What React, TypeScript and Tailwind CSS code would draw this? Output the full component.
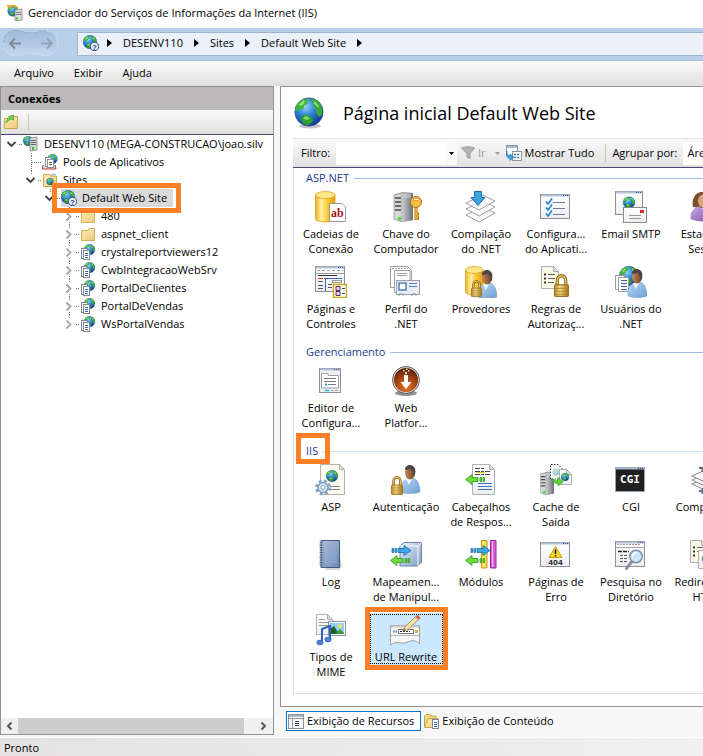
import React from "react";

type IconName =
    | "database" | "serverKey" | "layers" | "checklist" | "mail" | "session"
    | "pages" | "profile" | "providers" | "rules" | "users" | "editor" | "webPlatform"
    | "asp" | "auth" | "headers" | "cache" | "cgi" | "compress" | "log" | "handlers"
    | "modules" | "error404" | "search" | "redirect" | "mime" | "rewrite";

interface Feature {
    icon: IconName;
    lines: string[];
    selected?: boolean;
}

interface FeatureGroup {
    title: string;
    highlighted?: boolean;
    features: Feature[];
}

interface TreeNode {
    label: string;
    depth: number;
    icon: "server" | "pool" | "sites" | "site" | "folder" | "app";
    state: "open" | "closed" | "leaf";
    last?: boolean;
    selected?: boolean;
}

const tree: TreeNode[] = [
    { label: "DESENV110 (MEGA-CONSTRUCAO\\joao.silv", depth: 0, icon: "server", state: "open", last: true },
    { label: "Pools de Aplicativos", depth: 1, icon: "pool", state: "leaf" },
    { label: "Sites", depth: 1, icon: "sites", state: "open", last: true },
    { label: "Default Web Site", depth: 2, icon: "site", state: "open", last: true, selected: true },
    { label: "480", depth: 3, icon: "folder", state: "closed" },
    { label: "aspnet_client", depth: 3, icon: "folder", state: "closed" },
    { label: "crystalreportviewers12", depth: 3, icon: "app", state: "closed" },
    { label: "CwbIntegracaoWebSrv", depth: 3, icon: "app", state: "closed" },
    { label: "PortalDeClientes", depth: 3, icon: "app", state: "closed" },
    { label: "PortalDeVendas", depth: 3, icon: "app", state: "closed" },
    { label: "WsPortalVendas", depth: 3, icon: "app", state: "closed", last: true },
];

const indents = ["pl-[4px]", "pl-[23px]", "pl-[42px]", "pl-[61px]"];

const groups: FeatureGroup[] = [
    {
        title: "ASP.NET",
        features: [
            { icon: "database", lines: ["Cadeias de", "Conexão"] },
            { icon: "serverKey", lines: ["Chave do", "Computador"] },
            { icon: "layers", lines: ["Compilação", "do .NET"] },
            { icon: "checklist", lines: ["Configura...", "do Aplicati..."] },
            { icon: "mail", lines: ["Email SMTP"] },
            { icon: "session", lines: ["Estado de", "Sessão"] },
            { icon: "pages", lines: ["Páginas e", "Controles"] },
            { icon: "profile", lines: ["Perfil do", ".NET"] },
            { icon: "providers", lines: ["Provedores"] },
            { icon: "rules", lines: ["Regras de", "Autorizaç..."] },
            { icon: "users", lines: ["Usuários do", ".NET"] },
        ],
    },
    {
        title: "Gerenciamento",
        features: [
            { icon: "editor", lines: ["Editor de", "Configura..."] },
            { icon: "webPlatform", lines: ["Web", "Platfor..."] },
        ],
    },
    {
        title: "IIS",
        highlighted: true,
        features: [
            { icon: "asp", lines: ["ASP"] },
            { icon: "auth", lines: ["Autenticação"] },
            { icon: "headers", lines: ["Cabeçalhos", "de Respos..."] },
            { icon: "cache", lines: ["Cache de", "Saída"] },
            { icon: "cgi", lines: ["CGI"] },
            { icon: "compress", lines: ["Compacta..."] },
            { icon: "log", lines: ["Log"] },
            { icon: "handlers", lines: ["Mapeamen...", "de Manipul..."] },
            { icon: "modules", lines: ["Módulos"] },
            { icon: "error404", lines: ["Páginas de", "Erro"] },
            { icon: "search", lines: ["Pesquisa no", "Diretório"] },
            { icon: "redirect", lines: ["Redirecion...", "HTTP"] },
            { icon: "mime", lines: ["Tipos de", "MIME"] },
            { icon: "rewrite", lines: ["URL Rewrite"], selected: true },
        ],
    },
];

/* ---------- shared drawing parts ---------- */

const Gradients = () => (
    <svg width="0" height="0" className="absolute" aria-hidden="true">
        <defs>
            <radialGradient id="ocean" cx="0.38" cy="0.3" r="0.75">
                <stop offset="0" stopColor="#8fd4f8" />
                <stop offset="0.45" stopColor="#2f83d6" />
                <stop offset="1" stopColor="#0d2f8c" />
            </radialGradient>
            <linearGradient id="gold" x1="0" x2="1">
                <stop offset="0" stopColor="#f2b01f" />
                <stop offset="0.3" stopColor="#fff0a0" />
                <stop offset="0.6" stopColor="#fbc93a" />
                <stop offset="1" stopColor="#e79d12" />
            </linearGradient>
            <linearGradient id="brass" x1="0" x2="1">
                <stop offset="0" stopColor="#c08a24" />
                <stop offset="0.4" stopColor="#f6dc8c" />
                <stop offset="1" stopColor="#a87416" />
            </linearGradient>
            <linearGradient id="steel" x1="0" x2="1">
                <stop offset="0" stopColor="#c9cdd0" />
                <stop offset="0.5" stopColor="#9a9fa3" />
                <stop offset="1" stopColor="#6a6f74" />
            </linearGradient>
            <linearGradient id="shirt" x1="0" x2="1" y2="1">
                <stop offset="0" stopColor="#b9d8f4" />
                <stop offset="1" stopColor="#6c9fd4" />
            </linearGradient>
            <linearGradient id="lilac" x1="0" x2="1" y2="1">
                <stop offset="0" stopColor="#c7a6e6" />
                <stop offset="1" stopColor="#8357b0" />
            </linearGradient>
            <linearGradient id="skin" x1="0" x2="1">
                <stop offset="0" stopColor="#c08a5c" />
                <stop offset="1" stopColor="#6e4222" />
            </linearGradient>
            <linearGradient id="folder" x1="0" x2="1" y2="1">
                <stop offset="0" stopColor="#fdeeb6" />
                <stop offset="1" stopColor="#ecc97a" />
            </linearGradient>
            <linearGradient id="paper" x2="0" y2="1">
                <stop offset="0" stopColor="#ffffff" />
                <stop offset="1" stopColor="#eceef0" />
            </linearGradient>
            <linearGradient id="cube" x2="1" y2="1">
                <stop offset="0" stopColor="#eaf2fb" />
                <stop offset="1" stopColor="#7f9dc0" />
            </linearGradient>
            <linearGradient id="book" x2="1" y2="1">
                <stop offset="0" stopColor="#b4c6e0" />
                <stop offset="1" stopColor="#6c89b4" />
            </linearGradient>
            <linearGradient id="navwell" x2="0" y2="1">
                <stop offset="0" stopColor="#9fb9da" />
                <stop offset="1" stopColor="#c6d8ee" />
            </linearGradient>
            <radialGradient id="ember" cx="0.5" cy="0.8" r="0.8">
                <stop offset="0" stopColor="#e8742a" />
                <stop offset="0.6" stopColor="#9a3d10" />
                <stop offset="1" stopColor="#4e2009" />
            </radialGradient>
        </defs>
    </svg>
);

const Globe = ({ cx, cy, r }: { cx: number; cy: number; r: number }) => (
    <g transform={`translate(${cx - r} ${cy - r}) scale(${r / 14})`}>
        <circle cx="14" cy="14" r="13.6" fill="url(#ocean)" stroke="#27549c" strokeWidth="0.8" />
        <path d="M2 7 C4 4 7 2 9 2 L14 1 L12 4 L13 6 L9 8 L9 10 L6 12 L4 11 L1 14 C0.500 11 1 9 2 7Z" fill="#3fb53a" />
        <path d="M17 1 C22 2 26 6 27 11 L27 16 L24 19 L21 15 L21 11 L18 9 L20 6 L16 4Z" fill="#37a834" />
        <path d="M6 20 L10 16 L17 19 L18 23 L13 27 L8 25Z" fill="#2f9f33" />
        <path d="M18 3 L22 6 L24 10 L22 9 L19 6Z" fill="#9be36e" />
        <path d="M8 20 L11 17.500 L15 20 L12 22Z" fill="#82d65c" />
        <path d="M4 7 L9 3 L10 4 L7 8Z" fill="#a6e87c" />
    </g>
);

const Person = ({ x, y, shirt = "url(#shirt)" }: { x: number; y: number; shirt?: string }) => (
    <g transform={`translate(${x} ${y})`}>
        <path d="M0 27 C-1 19 3 14 8 13.500 L13 13.500 C17 15 19 21 19 27 C14 29 5 29 0 27Z" fill={shirt} stroke="#6f98c8" strokeWidth="0.5" />
        <path d="M5 14 L8 20 L11 14Z" fill="#f3f6fa" />
        <ellipse cx="9" cy="8" rx="5" ry="6.500" fill="url(#skin)" />
        <path d="M4 5 C4 0 9 -1 12 1 C15 3 15 8 13 12 L12 7 L10 4Z" fill="#4a4542" />
    </g>
);

const Padlock = ({ x, y, w, h }: { x: number; y: number; w: number; h: number }) => (
    <g transform={`translate(${x} ${y}) scale(${w / 14} ${h / 20})`}>
        <path d="M3 11 V6 A4 4.500 0 0 1 11 6 V11" fill="none" stroke="#8a6316" strokeWidth="3" />
        <path d="M3 11 V6 A4 4.500 0 0 1 11 6 V11" fill="none" stroke="#e8c768" strokeWidth="1.200" />
        <rect x="0.5" y="9.500" width="13" height="10" rx="1" fill="url(#brass)" stroke="#9a7220" />
        <path d="M1 12.500 H13 M1 15 H13 M1 17.500 H13" stroke="#a87a22" strokeWidth="0.7" />
    </g>
);

const Win = ({ x = 0, y = 0, w = 30, h = 25, fill = "url(#paper)" }: { x?: number; y?: number; w?: number; h?: number; fill?: string }) => (
    <g>
        <rect x={x + 0.5} y={y + 0.5} width={w - 1} height={h - 1} fill={fill} stroke="#8a9099" />
        <path d={`M${x + 1} ${y + 1.500} H${x + w - 1}`} stroke="#b4c2d6" strokeWidth="2" />
        <path d={`M${x + w - 7} ${y + 1.500} h1 m1 0 h1 m1 0 h1`} stroke="#2f4f8a" strokeWidth="1" />
    </g>
);

const Doc = ({ x, y, w, h, fill = "url(#paper)" }: { x: number; y: number; w: number; h: number; fill?: string }) => (
    <g stroke="#b0b0b0">
        <path d={`M${x + 0.5} ${y + 0.5} H${x + w - 5.500} L${x + w - 0.5} ${y + 5.500} V${y + h - 0.5} H${x + 0.5}Z`} fill={fill} />
        <path d={`M${x + w - 5.500} ${y + 0.5} V${y + 5.500} H${x + w - 0.5}Z`} fill="#dcdcdc" />
    </g>
);

const Tower = ({ x, y, w, h }: { x: number; y: number; w: number; h: number }) => (
    <g transform={`translate(${x} ${y}) scale(${w / 19} ${h / 30})`}>
        <path d="M0 3 L9 0 L19 1 V28 L9 30 L0 27Z" fill="#8d9296" />
        <path d="M0 3 L8 1 V30 L0 27Z" fill="#d6d9db" stroke="#777c80" strokeWidth="0.6" />
        <path d="M1 6 H7 M1 10 H7 M1 14 H7 M1 18 H7" stroke="#43484c" strokeWidth="1.500" />
        <path d="M8 1 L19 1 V28 L8 30Z" fill="url(#steel)" />
        <path d="M10 3 H17 M10 5 H17" stroke="#e7e9ea" strokeWidth="0.8" />
        <circle cx="5.500" cy="26.500" r="1.800" fill="#4ee01e" />
    </g>
);

const Cylinder = ({ w, h }: { w: number; h: number }) => (
    <g stroke="#d9980f" strokeWidth="0.7">
        <path d={`M0.500 4 V${h - 4} C0.500 ${h} ${w} ${h} ${w} ${h - 4} V4Z`} fill="url(#gold)" />
        <ellipse cx={w / 2 + 0.25} cy="4" rx={w / 2 - 0.25} ry="3.500" fill="#ffe68a" />
    </g>
);

const ArrowRight = ({ x, y }: { x: number; y: number }) => (
    <path transform={`translate(${x} ${y})`} d="M0 3.500 h1.500 v4 h-1.500z M3 3.500 h1.500 v4 h-1.500z M6 3.500 H12 V0.500 L19 5.500 L12 10.500 V7.500 H6Z" fill="#3fa9ea" stroke="#1769a8" strokeWidth="0.8" />
);

const ArrowLeft = ({ x, y }: { x: number; y: number }) => (
    <path transform={`translate(${x} ${y})`} d="M19.500 3.500 h-1.500 v4 h1.500z M16.500 3.500 h-1.500 v4 h1.500z M13 3.500 H7 V0.500 L0.500 5.500 L7 10.500 V7.500 H13Z" fill="#6fdc3c" stroke="#2f9a1c" strokeWidth="0.8" />
);

const art: Record<IconName, React.ReactNode> = {
    database: (
        <g>
            <Cylinder w={20} h={32} />
            <path d="M14.500 12.500 H27 L30.500 16 V30.500 H14.500Z" fill="#fff" stroke="#9a9a9a" />
            <text x="16" y="26" fontSize="12" fontWeight="bold" fontFamily="Liberation Serif, serif" fill="#a31515">ab</text>
        </g>
    ),
    serverKey: (
        <g>
            <Tower x={4} y={1} w={19} h={30} />
            <path d="M26 16 V29 M26 23 h3 M26 27 h3" stroke="#b2700f" strokeWidth="3" fill="none" />
            <path d="M26 16 V28.500 M26 23 h2 M26 27 h2" stroke="#f7b733" strokeWidth="1.500" fill="none" />
            <circle cx="26" cy="11" r="5.500" fill="#f9bf43" stroke="#b2700f" />
            <rect x="23.500" y="7.500" width="5" height="2" rx="1" fill="#fff" stroke="#b2700f" strokeWidth="0.6" />
        </g>
    ),
    layers: (
        <g fill="#fbfbfb" stroke="#9a9fa5">
            <path d="M1 24 L18 16 L30 22 L14 31Z" />
            <path d="M1 18 L18 10 L30 16 L14 25Z" />
            <path d="M1 12 L18 4 L30 10 L14 19Z" />
            <path d="M9.500 0.500 H16.500 V6.500 H20 L13 14.500 L6 6.500 H9.500Z" fill="#3fa3e0" stroke="#1c6fae" />
        </g>
    ),
    checklist: (
        <g>
            <Win y={3} />
            <path d="M13 11.500 H25 M13 17.500 H25 M13 23.500 H25" stroke="#6f7f9c" />
            <path d="M6 10.500 L8 13 L12 7.500 M6 16.500 L8 19 L12 13.500 M6 22.500 L8 25 L12 19.500" fill="none" stroke="#1a84c6" strokeWidth="1.600" />
        </g>
    ),
    mail: (
        <g>
            <Win w={28} h={24} />
            <Globe cx={14} cy={11.500} r={6} />
            <rect x="8.500" y="16.500" width="23" height="15" fill="url(#paper)" stroke="#8a8a8a" />
            <path d="M14 24.500 H26 M14 27.500 H26" stroke="#9b9b9b" />
            <rect x="25" y="19" width="4" height="3" fill="#e0252b" />
        </g>
    ),
    session: (
        <g>
            <path d="M3 16 C1 6 7 0 13 1 C20 2 21 10 20 18Z" fill="#7a5030" />
            <ellipse cx="13" cy="10" rx="5" ry="6.500" fill="#d8a67a" />
            <path d="M0.500 28 C0 20 5 16 9 15.500 L14 19 L18 16 C22 18 24 23 24 29 C16 31 6 31 0.500 28Z" fill="url(#lilac)" />
            <circle cx="24" cy="22" r="8" fill="#dfe8f2" stroke="#7c90a8" />
        </g>
    ),
    pages: (
        <g>
            <Win h={26} />
            <path d="M2 4.500 H28" stroke="#9aa0a6" strokeDasharray="3 2" />
            <path d="M1 7.500 H29" stroke="#999" />
            <path d="M3 9.500 H22" stroke="#333" />
            <path d="M3 12.500 H8" stroke="#e33" />
            <path d="M9 12.500 H27" stroke="#3a62d0" />
            <path d="M10.500 13 V25" stroke="#3a62d0" />
            <path d="M3 15.500 H8 M3 19.500 H8 M3 22.500 H8 M13 18.500 H17 M13 21.500 H17" stroke="#555" />
            <rect x="17.500" y="14.500" width="9" height="2" fill="#fff" stroke="#999" />
            <rect x="18.500" y="18.500" width="13" height="13" fill="#fffdf0" stroke="#c9a60c" strokeWidth="1.400" />
            <path d="M21 20.500 h4 v4 h-4z M21 25.500 h4 v4 h-4z" fill="#e8d6ea" stroke="#5d2a63" />
            <path d="M27 22.500 H30 M27 27.500 H30" stroke="#3050b0" />
        </g>
    ),
    profile: (
        <g fill="#fff" stroke="#9a9fa5">
            <path d="M0.500 0.500 H17.500 L21.500 4.500 V21.500 H0.500Z" />
            <path d="M2 2.500 H18" strokeDasharray="2 1" />
            <path d="M4.500 4.500 H20 V26.500 H4.500Z" />
            <path d="M7 7.500 H17 M7 9.500 H17" />
            <rect x="6.500" y="14.500" width="23" height="14" fill="#e8eef4" />
            <path d="M9 30 v-2 h4 v2 M22 30 v-2 h4 v2" fill="none" />
            <rect x="9" y="17" width="7" height="7" stroke="#4a7fc0" strokeWidth="1.500" />
            <path d="M19 17.500 H27 M19 20.500 H27" stroke="#4f86c0" />
        </g>
    ),
    providers: (
        <g>
            <Cylinder w={18} h={30} />
            <Person x={13} y={4} />
            <Padlock x={6} y={14} w={11} h={17} />
        </g>
    ),
    rules: (
        <g>
            <Doc x={1} y={0} w={18} h={23} fill="#fbfae8" />
            <path d="M4 8.500 H6 M4 12.500 H6 M4 16.500 H6" stroke="#333" strokeWidth="2" />
            <path d="M8 8.500 H15 M8 12.500 H15 M8 16.500 H14" stroke="#666" />
            <Padlock x={14} y={8} w={15} h={23} />
        </g>
    ),
    users: (
        <g>
            <Globe cx={14} cy={10} r={10} />
            <rect x="0.5" y="9.500" width="9" height="14" fill="#fff" stroke="#9a9fa5" />
            <rect x="3.500" y="11.500" width="10" height="14" fill="#fff" stroke="#9a9fa5" />
            <path d="M6 14.500 H12 M6 17.500 H12 M6 20.500 H12 M6 23.500 H12" stroke="#3a62b0" />
            <Person x={13} y={3} />
        </g>
    ),
    editor: (
        <g>
            <Win x={4} y={3} w={22} h={25} fill="#eef0f2" />
            <path d="M6.500 10.500 V8.500 H13 V10.500 H23.500 V23 H6.500Z" fill="#fff" stroke="#9aa0a6" />
            <path d="M9 13.500 H21 M9 16.500 H21" stroke="#777" />
            <path d="M10 19.500 H12" stroke="#1aa0d8" strokeWidth="2" />
            <path d="M13 19.500 H21" stroke="#777" />
            <path d="M10 25.500 H14" stroke="#17c0e8" strokeWidth="1.500" />
            <path d="M16 25.500 H23" stroke="#a9a9a9" strokeDasharray="3 1" />
        </g>
    ),
    webPlatform: (
        <g>
            <ellipse cx="16" cy="28" rx="11" ry="3" fill="#8f8f8f" />
            <circle cx="16" cy="15" r="13.500" fill="#d9d2cd" stroke="#6b5f58" />
            <circle cx="16" cy="15" r="12" fill="url(#ember)" />
            <path d="M14 10 H18 V17 H21.500 L16 24 L10.500 17 H14Z" fill="#fff" />
            <path d="M15 7 h2 v2 h-2z M18 5 h1.500 v1.500 h-1.500z M13 5 h1.500 v1.500 h-1.500z M16 3.500 h1.500 v1.500 h-1.500z" fill="#f6d9c6" />
        </g>
    ),
    asp: (
        <g>
            <Doc x={5} y={0} w={25} h={31} fill="#fbfbf0" />
            <Globe cx={17} cy={12} r={6} />
            <path d="M15 22.500 H25 M15 25.500 H25" stroke="#8a7f9a" />
            <circle cx="8" cy="23.500" r="6.500" fill="none" stroke="#8aa6c6" strokeWidth="3" strokeDasharray="3 2.100" />
            <circle cx="8" cy="23.500" r="5" fill="#dbe7f3" stroke="#7f9dbf" strokeWidth="1.500" />
            <circle cx="8" cy="23.500" r="2" fill="#fff" stroke="#7f9dbf" />
        </g>
    ),
    auth: (
        <g>
            <Person x={11} y={1} />
            <Padlock x={1} y={12} w={12} h={19} />
        </g>
    ),
    headers: (
        <g>
            <Doc x={7} y={0} w={23} h={31} />
            <path d="M10 4.500 H20 M10 7.500 H25 M10 10.500 H25" stroke="#444" strokeDasharray="5 1 3 1" />
            <path d="M11 8.500 H20" stroke="#e8c21c" />
            <path d="M13 19.500 H27 M13 22.500 H27 M13 25.500 H27" stroke="#3a72c0" />
            <ArrowLeft x={0} y={10} />
        </g>
    ),
    cache: (
        <g>
            <Tower x={0} y={8} w={14} h={23} />
            <path d="M10.500 15 V0.500 H18 L22.500 5 V15Z" fill="#fff" stroke="#333" strokeDasharray="1.500 1.500" />
            <g opacity="0.4"><Globe cx={16} cy={8} r={3.5} /></g>
            <Doc x={19} y={5} w={13} h={16} />
            <Globe cx={25} cy={13} r={4} />
            <path d="M12 14 C14 17 16 17 18 16 V13.500 L23 18 L18 22 V19.500 C15 20 13 18 12 14Z" fill="#5fd334" stroke="#2f9a1c" strokeWidth="0.6" />
        </g>
    ),
    cgi: (
        <g>
            <rect x="0.5" y="3.500" width="29" height="24" fill="#1f2022" stroke="#9aa3ad" />
            <path d="M1 4.500 H29" stroke="#a9b8cd" strokeWidth="2" />
            <path d="M23 4.500 h1 m1 0 h1 m1 0 h1" stroke="#2f4f8a" />
            <text x="15" y="19" fontSize="11" fontWeight="bold" textAnchor="middle" fontFamily="DejaVu Sans Mono, monospace" fill="#fff">CGI</text>
        </g>
    ),
    compress: (
        <g fill="#f7f7f7" stroke="#8c8c8c">
            <path d="M2 20 L15 14 L29 19 L17 27Z" />
            <path d="M2 16 L15 10 L29 15 L17 23Z" />
            <path d="M2 12 L15 6 L29 11 L17 19Z" />
            <path d="M12.500 3 V8 M9 4 H16 M12.500 30 V24 M9 27 H16" stroke="#5c6f86" strokeWidth="2" />
        </g>
    ),
    log: (
        <g>
            <path d="M22 3 L27 27 L24 31 H10Z" fill="#d5d5d5" />
            <path d="M6 1.500 H24.500 V28.500 H6Z" fill="url(#book)" stroke="#41597f" />
            <path d="M10 5 H21 M10 8 H21 M10 11 H21 M10 14 H21 M10 17 H21 M10 20 H21 M10 23 H21" stroke="#8fa8cc" />
            <path d="M6.500 3 V28" stroke="#5b6a84" strokeWidth="4" strokeDasharray="1 1.500" />
        </g>
    ),
    handlers: (
        <g>
            <path d="M10 7 L14 3.500 H31.500 V23 L28 27 H10Z" fill="url(#cube)" stroke="#6f87a6" />
            <path d="M10 7 H28 V27 M28 7 L31.500 3.500" fill="none" stroke="#fff" />
            <ArrowRight x={2} y={6} />
            <ArrowLeft x={0} y={16} />
        </g>
    ),
    modules: (
        <g>
            <path d="M16.500 1.500 H22 V29 H16.500Z" fill="#f6dc4a" stroke="#c79a12" />
            <path d="M25.500 1.500 H31 V29 H25.500Z" fill="#d95fd0" stroke="#97249b" />
            <path d="M18.500 2 V28 M27.500 2 V28" stroke="#fff" strokeOpacity="0.6" />
            <ArrowRight x={6} y={6} />
            <ArrowLeft x={0} y={16} />
        </g>
    ),
    error404: (
        <g>
            <Win y={3} />
            <path d="M15.500 7.500 L22 18.500 H9Z" fill="#fbd726" stroke="#c79a12" strokeLinejoin="round" />
            <path d="M15.500 10.500 V15 M15.500 16 V17.500" stroke="#222" strokeWidth="1.600" />
            <text x="15.500" y="26" fontSize="7" fontWeight="bold" textAnchor="middle" fontFamily="DejaVu Sans, sans-serif" fill="#333">404</text>
        </g>
    ),
    search: (
        <g>
            <Win y={2} h={26} />
            <path d="M2 5.500 H26" stroke="#999" strokeDasharray="2 1" />
            <path d="M1 8.500 H29" stroke="#aaa" />
            <path d="M3 12.500 H14" stroke="#222" strokeWidth="1.400" strokeDasharray="4 1" />
            <path d="M5 16.500 H13 M5 19.500 H12 M5 22.500 H12" stroke="#555" strokeDasharray="3 1" />
            <path d="M16.500 23 L11.500 29.500" stroke="#8b929c" strokeWidth="3" strokeLinecap="round" />
            <circle cx="21" cy="17.500" r="6.200" fill="#cfe4f8" stroke="#7f8ea0" strokeWidth="1.500" />
            <path d="M17.500 17 A4 4 0 0 1 22 13.500" fill="none" stroke="#fff" strokeWidth="1.500" />
        </g>
    ),
    redirect: (
        <g>
            <Doc x={0} y={1} w={17} h={23} fill="#fbfae8" />
            <path d="M3 8.500 H5 M3 12.500 H5 M3 16.500 H5" stroke="#333" strokeWidth="2" />
            <path d="M7 8.500 H13 M7 12.500 H13" stroke="#666" />
            <Doc x={8} y={11} w={20} h={19} />
            <Globe cx={17} cy={20} r={5} />
        </g>
    ),
    mime: (
        <g>
            <Doc x={1} y={0} w={17} h={21} />
            <path d="M4 5.500 H10 M4 8.500 H13 M4 11.500 H13" stroke="#999" />
            <rect x="13.500" y="7.500" width="17" height="14" fill="#fff" stroke="#8c9299" />
            <rect x="15" y="9" width="14" height="11" fill="#8fd0f6" />
            <path d="M15 20 V15 L19 12 L24 20Z" fill="#1f5f2a" />
            <path d="M20 20 L25 15 L29 19 V20Z" fill="#3d9a3c" />
            <circle cx="25" cy="12" r="2" fill="#f9e04a" />
            <path d="M7 28 V15 L15 12 V25" fill="none" stroke="#2f62b8" strokeWidth="2" />
            <ellipse cx="5" cy="28.500" rx="3.200" ry="2.400" fill="#4a86da" stroke="#234f9a" strokeWidth="0.6" />
            <ellipse cx="13" cy="25.500" rx="3.200" ry="2.400" fill="#4a86da" stroke="#234f9a" strokeWidth="0.6" />
        </g>
    ),
    rewrite: (
        <g>
            <path d="M0.500 11.500 H29.500 V30 C26 26 22 26 18 28 C12 31 6 26 0.500 31Z" fill="#f7f7f5" stroke="#9a9fa5" />
            <path d="M1 12.500 H29" stroke="#c8ccd0" strokeWidth="2" />
            <path d="M1 21.500 H29" stroke="#b5b9be" />
            <rect x="8.500" y="15.500" width="15" height="4" fill="#fff" stroke="#777" />
            <path d="M10 17.500 H20" stroke="#222" strokeDasharray="2 1" />
            <path d="M3 17.500 h1.500 m1 0 h1.500" stroke="#3b8ed0" strokeWidth="2" />
            <rect x="25" y="16" width="3" height="3" fill="#e5b13a" />
            <path d="M13 17 L15 12.500 L27 1.500 L30 4 L18 15.500Z" fill="#f7e2a4" stroke="#8d7a4c" strokeWidth="0.8" />
            <path d="M25.500 3 L27.500 1 L30.500 3.500 L28.500 5.800Z" fill="#e0544c" />
            <path d="M13 17 L14 14.800 L15.500 16Z" fill="#333" />
        </g>
    ),
};

const TreeIcon = ({ kind }: { kind: TreeNode["icon"] }) => (
    <svg width="16" height="16" viewBox="0 0 16 16" className="shrink-0" aria-hidden="true">
        {kind === "server" && (
            <g>
                <Globe cx={5} cy={5} r={5} />
                <path d="M7 2 L14 1 V14 L7 15Z" fill="#d5d8da" stroke="#7c8185" strokeWidth="0.8" />
                <path d="M8 4.500 H13 M8 6.500 H13 M8 8.500 H13" stroke="#666" />
                <path d="M9 12.500 H11" stroke="#35c71a" strokeWidth="3" />
            </g>
        )}
        {kind === "pool" && (
            <g>
                <Globe cx={10.5} cy={5} r={5} />
                <path d="M1 11 L0.500 15 H14 L13 11" fill="#d9dde2" stroke="#c23a3a" />
                <rect x="3.500" y="3.500" width="6" height="9" fill="#fff" stroke="#8a9099" />
                <rect x="5.500" y="5.500" width="6" height="8" fill="#fff" stroke="#8a9099" />
                <path d="M7 8.500 H10 M7 10.500 H10" stroke="#555" />
            </g>
        )}
        {kind === "sites" && (
            <g>
                <path d="M1.500 2.500 H8 L9 4 H14.500 V14.500 H1.500Z" fill="url(#folder)" stroke="#c9a64a" />
                <path d="M9 2.500 H14" stroke="#9cc4e0" strokeWidth="1.500" />
                <Globe cx={8} cy={9.5} r={3.5} />
            </g>
        )}
        {kind === "site" && (
            <g>
                <Globe cx={7} cy={7} r={7} />
                <circle cx="11.500" cy="11.500" r="4.200" fill="#eef2fb" stroke="#2f4f9a" />
                <text x="11.500" y="14.500" fontSize="8" fontWeight="bold" textAnchor="middle" fontFamily="Liberation Sans, sans-serif" fill="#2244a0">?</text>
            </g>
        )}
        {kind === "folder" && (
            <g>
                <path d="M1.500 4.500 H8 L9 2.500 H14.500 V14.500 H1.500Z" fill="url(#folder)" stroke="#d3b158" />
                <path d="M10 3.500 H13" stroke="#fff" />
            </g>
        )}
        {kind === "app" && (
            <g>
                <Globe cx={9.5} cy={5.5} r={5.5} />
                <rect x="1.500" y="4.500" width="6" height="10" fill="#fff" stroke="#7d8791" />
                <rect x="3.500" y="6.500" width="6" height="9" fill="#fff" stroke="#7d8791" />
                <path d="M5 9.500 H8 M5 11.500 H8 M5 13.500 H8" stroke="#3a62b0" />
            </g>
        )}
    </svg>
);

const TreeRow = ({ node }: { node: TreeNode }) => (
    <li className="relative">
        <button className={`flex h-[18px] w-full items-center text-left ${indents[node.depth]}`}>
            <svg width="18" height="18" viewBox="0 0 18 18" className="shrink-0" fill="none" aria-hidden="true">
                {node.depth > 0 && <path d="M7.500 0 V3" stroke="#777" strokeDasharray="1 1" />}
                {node.depth > 0 && !node.last && <path d="M7.500 15 V18" stroke="#777" strokeDasharray="1 1" />}
                {node.state === "leaf" && <path d="M7.500 3 V15 M8 9.500 H18" stroke="#777" strokeDasharray="1 1" />}
                {node.state !== "leaf" && <path d="M14 9.500 H18" stroke="#777" strokeDasharray="1 1" />}
                {node.state === "open" && <path d="M2.500 7 L6.500 11 L10.500 7" stroke="#404040" strokeWidth="1.800" />}
                {node.state === "closed" && <path d="M4.500 5.500 L8.500 9.500 L4.500 13.500" stroke="#a6a6a6" strokeWidth="1.800" />}
            </svg>
            <span className={`flex h-[18px] items-center gap-[5px] whitespace-nowrap ${node.selected ? "bg-[#d9d9d9] pr-[6px]" : ""}`}>
                <TreeIcon kind={node.icon} />
                {node.label}
            </span>
        </button>
        {node.selected && (
            <span className="pointer-events-none absolute -top-[6px] left-[51px] z-10 h-[30px] w-[129px] border-5 border-[#ff7f27]" />
        )}
    </li>
);

const FeatureTile = ({ feature }: { feature: Feature }) => (
    <div className="relative h-[75px] pt-[2px]">
        <button
            className={`flex w-full flex-col items-center gap-[3px] whitespace-nowrap pb-px pr-px pt-px text-center leading-[15px] ${
                feature.selected ? "bg-[#cce8ff] outline-1 -outline-offset-2 outline-dotted outline-black" : ""
            }`}
        >
            <svg width="32" height="32" viewBox="0 0 32 32" aria-hidden="true">
                {art[feature.icon]}
            </svg>
            <span>
                {feature.lines.map((line) => (
                    <span key={line} className="block">{line}</span>
                ))}
            </span>
        </button>
        {feature.selected && (
            <span className="pointer-events-none absolute -left-1 -top-1 z-10 h-[63px] w-[83px] border-5 border-[#ff7f27]" />
        )}
    </div>
);

const Caret = () => (
    <svg width="5" height="8" viewBox="0 0 5 8" aria-hidden="true">
        <path d="M0 0 L5 4 L0 8Z" fill="#000" />
    </svg>
);

const App: React.FC = () => {
    return (
        <div className="flex h-screen w-full flex-col overflow-hidden bg-[#f7f7f7] font-['Open_Sans',sans-serif] text-[11px] leading-[18px] text-black">
            <Gradients />

            {/* Title bar */}
            <header className="flex h-7 shrink-0 items-center gap-[5px] bg-white pb-[2px] pl-[7px]">
                <svg width="16" height="16" viewBox="0 0 16 16" aria-hidden="true">
                    <Globe cx={6} cy={6} r={5.5} />
                    <path d="M0 1 H6 M1 3 C3 0 8 0 11 3" stroke="#f0a020" strokeWidth="1.500" fill="none" />
                    <path d="M8 5 L15 4 V15 L8 16Z" fill="#dcdfe1" stroke="#80868a" strokeWidth="0.8" />
                    <path d="M9 7.500 H14 M9 9.500 H14" stroke="#777" />
                    <path d="M9 13.500 H11" stroke="#35c71a" strokeWidth="2" />
                </svg>
                <h1>Gerenciador do Serviços de Informações da Internet (IIS)</h1>
            </header>

            {/* Address bar */}
            <div className="flex h-[33px] shrink-0 items-start border-b border-[#a9c2e0] bg-[#b8cfea] pl-[3px] pt-[2px]">
                <svg width="56" height="28" viewBox="0 0 56 28" aria-hidden="true">
                    <path d="M12 0.500 C18 0.500 21 3 28 3 C35 3 38 0.500 43 0.500 C50 0.500 54.500 7 54.500 13 C54.500 20 50 26 43 26 C37 26 34 23 28 23 C22 23 19 26 13 26 C5 26 0.500 20 0.500 13 C0.500 6 5 0.500 12 0.500Z" fill="url(#navwell)" stroke="#cbdcf0" />
                    <path d="M0.500 13 C0.500 6 5 0.500 12 0.500 C18 0.500 21 3 28 3 C35 3 38 0.500 43 0.500" fill="none" stroke="#8fa9ca" />
                    <path d="M18 13.500 H7 M12 8.500 L7 13.500 L12 18.500" fill="none" stroke="#7d8b9c" strokeWidth="2" />
                    <path d="M38 13.500 H49 M44 8.500 L49 13.500 L44 18.500" fill="none" stroke="#93a3b6" strokeWidth="2" />
                </svg>
                <nav className="ml-[18px] mt-[2px] flex h-6 flex-1 items-center border-y border-l border-[#9fb3cf] bg-[#eaf1fa] pb-[2px] pl-[5px]">
                    <TreeIcon kind="site" />
                    <div className="ml-2 flex items-center gap-[11px]">
                        <Caret />
                        <button>DESENV110</button>
                        <Caret />
                        <button>Sites</button>
                        <Caret />
                        <button>Default Web Site</button>
                        <Caret />
                    </div>
                </nav>
            </div>

            {/* Menu bar */}
            <nav className="flex h-[25px] shrink-0 items-center gap-5 bg-gradient-to-b from-[#fcfcfc] to-[#e0dedf] pb-[2px] pl-[14px]">
                <button>Arquivo</button>
                <button>Exibir</button>
                <button>Ajuda</button>
            </nav>

            <main className="flex min-h-0 flex-1 gap-[6px]">
                {/* Connections */}
                <aside className="flex w-[274px] shrink-0 flex-col border border-[#929292] bg-white">
                    <h2 className="h-[23px] shrink-0 bg-[#bbb9ba] pl-[7px] font-bold leading-[23px]">Conexões</h2>
                    <div className="flex h-[25px] shrink-0 items-center gap-2 border-b border-[#46466f] bg-gradient-to-b from-[#fafafa] to-[#e0dedf] pl-[2px]">
                        <button aria-label="Conectar">
                            <svg width="17" height="16" viewBox="0 0 17 16" className="block" aria-hidden="true">
                                <path d="M1.500 4.500 H7 L9 2.500 H14.500 V14.500 H1.500Z" fill="url(#folder)" stroke="#c9a64a" />
                                <path d="M3 9 C3 6 5 4 7 4 L5.500 2.500 L10.500 1 L10.500 6 L9 5 C6 6 5 7 3 9Z" fill="#6fcf4a" stroke="#3f9a2c" strokeWidth="0.6" />
                            </svg>
                        </button>
                        <span className="h-4 w-px bg-[#c8c6b0]" />
                    </div>
                    <ul className="min-h-0 flex-1 overflow-hidden">
                        {tree.map((node) => (
                            <TreeRow key={node.label} node={node} />
                        ))}
                    </ul>
                    <div className="flex h-4 shrink-0 bg-[#f0f0f0]">
                        <button className="flex w-[17px] items-center justify-center" aria-label="Rolar para a esquerda">
                            <svg width="7" height="8" viewBox="0 0 7 8" fill="none" aria-hidden="true"><path d="M5.500 0.500 L2 4 L5.500 7.500" stroke="#555" strokeWidth="2" /></svg>
                        </button>
                        <span className="mr-[9px] flex-1 bg-[#cdcdcd]" />
                        <button className="flex w-5 items-center justify-center" aria-label="Rolar para a direita">
                            <svg width="7" height="8" viewBox="0 0 7 8" fill="none" aria-hidden="true"><path d="M1.500 0.500 L5 4 L1.500 7.500" stroke="#555" strokeWidth="2" /></svg>
                        </button>
                    </div>
                </aside>

                <div className="flex min-w-0 flex-1 flex-col">
                    {/* Feature view */}
                    <section className="flex min-h-0 flex-1 flex-col overflow-hidden border-y border-l border-[#929292] bg-white pb-3 pl-3">
                        <div className="flex h-[51px] shrink-0 items-center gap-[17px] pl-px">
                            <svg width="32" height="32" viewBox="0 0 32 32" aria-hidden="true">
                                <ellipse cx="16" cy="29" rx="11" ry="2.500" fill="#c4c4c4" />
                                <Globe cx={15} cy={15} r={14.5} />
                            </svg>
                            <h2 className="whitespace-nowrap text-[18px] leading-6">Página inicial Default Web Site</h2>
                        </div>

                        <div className="flex h-[30px] shrink-0 items-center whitespace-nowrap border-b border-t border-b-[#46466f] border-t-[#e4e4e4] bg-gradient-to-b from-[#fafafa] to-[#e2e0e1] pl-2">
                            <label htmlFor="filter" className="w-[35px] shrink-0">Filtro:</label>
                            <span className="flex h-[23px] w-[121px] shrink-0 items-center bg-white">
                                <input id="filter" type="text" className="h-full min-w-0 flex-1 px-1 outline-none" />
                                <button className="flex h-full w-[11px] items-center justify-center bg-[#fafafa]" aria-label="Filtros recentes">
                                    <svg width="5" height="3" viewBox="0 0 5 3" aria-hidden="true"><path d="M0 0 H5 L2.500 3Z" fill="#000" /></svg>
                                </button>
                            </span>
                            <button disabled className="ml-1 flex shrink-0 items-center gap-[3px] text-[#9a9a9a]">
                                <svg width="14" height="14" viewBox="0 0 14 14" aria-hidden="true">
                                    <path d="M0.500 2 C3 0.500 11 0.500 13.500 2 L9 7.500 V12.500 L6 11 V7.500Z" fill="#b4b4b4" stroke="#9a9a9a" />
                                </svg>
                                Ir
                                <svg width="5" height="3" viewBox="0 0 5 3" className="ml-[6px]" aria-hidden="true"><path d="M0 0 H5 L2.500 3Z" fill="#999" /></svg>
                            </button>
                            <button className="ml-[6px] flex shrink-0 items-center gap-[3px]">
                                <svg width="16" height="16" viewBox="0 0 16 16" aria-hidden="true">
                                    <rect x="0.500" y="0.500" width="11" height="10" fill="#fff" stroke="#8a94a6" />
                                    <path d="M1 2 H11" stroke="#a9b8cd" strokeWidth="2" />
                                    <rect x="6.500" y="6.500" width="9" height="9" fill="#fff" stroke="#8a94a6" />
                                    <path d="M8 9.500 h2 m1 0 h2 M8 12.500 h2 m1 0 h2" stroke="#5a6f92" strokeWidth="1.500" />
                                    <path d="M1 6 C1 10 2 11 4 11 V9 L8 12 L4 15.500 V13.500 C0 13 0 9 1 6Z" fill="#3fa3e0" stroke="#1c6fae" strokeWidth="0.6" />
                                </svg>
                                Mostrar Tudo
                            </button>
                            <span className="ml-[11px] mr-[6px] h-[18px] w-px shrink-0 bg-[#c8c6b0]" />
                            <label htmlFor="group-by" className="shrink-0">Agrupar por:</label>
                            <select id="group-by" className="ml-[6px] h-[23px] w-24 shrink-0 appearance-none bg-white pl-1 outline-none">
                                <option>Área</option>
                            </select>
                        </div>

                        <div className="min-h-0 flex-1 overflow-hidden border-b border-l border-[#e0e0e0]">
                            {groups.map((group) => (
                                <section key={group.title} className="pb-1">
                                    <div className="relative flex h-5 items-center gap-[5px] pl-3">
                                        <h3 className="text-[#1e3c96]">{group.title}</h3>
                                        <span className={`h-px flex-1 ${group.highlighted ? "bg-[#d3dff2]" : "bg-[#a5b8e0]"}`} />
                                        {group.highlighted && (
                                            <span className="pointer-events-none absolute -top-2 left-[2px] z-10 h-[31px] w-[34px] border-5 border-[#ff7f27]" />
                                        )}
                                    </div>
                                    <div className="grid grid-cols-[repeat(6,75px)]">
                                        {group.features.map((feature) => (
                                            <FeatureTile key={feature.icon} feature={feature} />
                                        ))}
                                    </div>
                                </section>
                            ))}
                        </div>
                    </section>

                    {/* View switch */}
                    <div className="flex h-7 shrink-0 items-center gap-[2px] whitespace-nowrap pl-[6px]">
                        <button className="flex h-5 items-center gap-[3px] border border-[#0078d7] bg-white pl-px pr-[6px]">
                            <svg width="16" height="15" viewBox="0 0 16 15" aria-hidden="true">
                                <rect x="0.500" y="0.500" width="15" height="14" fill="#f4f5f6" stroke="#8a9099" />
                                <path d="M1 2 H15" stroke="#a9b8cd" strokeWidth="2" />
                                <path d="M1 4.500 H15 M4.500 4 V14" stroke="#999" />
                                <rect x="6" y="6" width="6" height="7" fill="#fff" />
                                <path d="M7 7.500 H11 M7 9.500 H11 M7 11.500 H11" stroke="#444" />
                            </svg>
                            Exibição de Recursos
                        </button>
                        <button className="flex h-5 items-center gap-[2px]">
                            <svg width="17" height="16" viewBox="0 0 17 16" aria-hidden="true">
                                <path d="M1.500 13.500 V3 L3 1.500 H7 L8 3 H13 V13.500Z" fill="#f3d88a" stroke="#c9a64a" />
                                <path d="M1.500 14.500 L5 5.500 H15 L12 14.500Z" fill="url(#folder)" stroke="#c9a64a" />
                                <rect x="9.500" y="6.500" width="6" height="9" fill="#fff" stroke="#7d8791" />
                                <path d="M11 9.500 H14 M11 11.500 H14 M11 13.500 H14" stroke="#3a62b0" />
                            </svg>
                            Exibição de Conteúdo
                        </button>
                    </div>
                </div>
            </main>

            {/* Status bar */}
            <footer className="mt-[2px] h-[19px] shrink-0 border-t border-white bg-gradient-to-r from-[#e4e2e3] to-[#f0f0f0] pl-1 leading-[19px]">Pronto</footer>
        </div>
    );
};

export default App;
